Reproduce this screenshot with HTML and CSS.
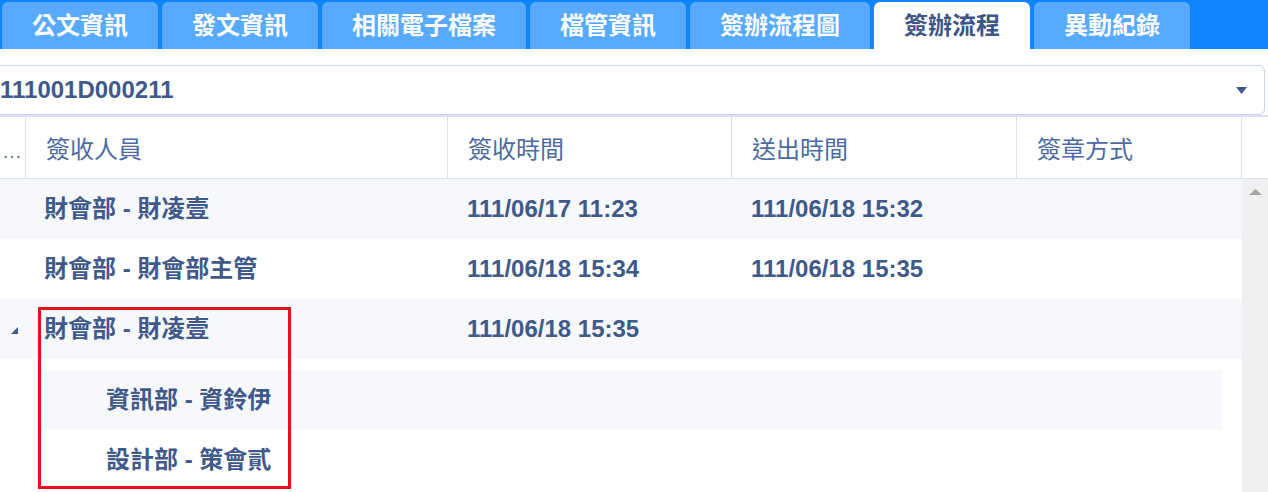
FILE: index.html
```html
<!DOCTYPE html>
<html lang="zh-Hant">
<head>
<meta charset="utf-8">
<title>簽辦流程</title>
<link rel="stylesheet" href="styles.css">
</head>
<body>
<div class="tabs">
  <div class="tab">公文資訊</div>
  <div class="tab">發文資訊</div>
  <div class="tab">相關電子檔案</div>
  <div class="tab">檔管資訊</div>
  <div class="tab">簽辦流程圖</div>
  <div class="tab active">簽辦流程</div>
  <div class="tab">異動紀錄</div>
</div>

<div class="select">
  <span class="select-value">111001D000211</span>
  <svg class="caret" width="11" height="7" viewBox="0 0 11 7"><polygon points="0,0 11,0 5.5,7" fill="#3f5a8c"/></svg>
</div>

<div class="grid">
  <div class="head">
    <div class="hcell first">…</div>
    <div class="hcell">簽收人員</div>
    <div class="hcell">簽收時間</div>
    <div class="hcell">送出時間</div>
    <div class="hcell">簽章方式</div>
    <div class="hcell spacer"></div>
  </div>
  <div class="body-wrap">
    <div class="body">
      <div class="row alt">
        <div class="cell first"></div>
        <div class="cell name">財會部 - 財凌壹</div>
        <div class="cell">111/06/17 11:23</div>
        <div class="cell">111/06/18 15:32</div>
        <div class="cell"></div>
      </div>
      <div class="row">
        <div class="cell first"></div>
        <div class="cell name">財會部 - 財會部主管</div>
        <div class="cell">111/06/18 15:34</div>
        <div class="cell">111/06/18 15:35</div>
        <div class="cell"></div>
      </div>
      <div class="row alt">
        <div class="cell first expander"><svg width="7" height="7" viewBox="0 0 7 7"><polygon points="7,0 7,7 0,7" fill="#3f5a8c"/></svg></div>
        <div class="cell name">財會部 - 財凌壹</div>
        <div class="cell">111/06/18 15:35</div>
        <div class="cell"></div>
        <div class="cell"></div>
      </div>
      <div class="nested">
        <div class="subrow alt">資訊部 - 資鈴伊</div>
        <div class="subrow">設計部 - 策會貳</div>
      </div>
      <div class="highlight"></div>
    </div>
    <div class="scrollbar">
      <svg class="arrow" width="13" height="6" viewBox="0 0 13 6"><polygon points="6.5,0 13,6 0,6" fill="#a6a6a6"/></svg>
    </div>
  </div>
</div>
</body>
</html>
```

FILE: styles.css
```css
* { box-sizing: border-box; }

html, body {
  margin: 0;
  padding: 0;
  background: #ffffff;
  font-family: "Liberation Sans", "Noto Sans CJK TC", sans-serif;
  font-size: 24px;
  color: #3f5a8a;
  overflow: hidden;
  width: 1268px;
  height: 492px;
}

.tabs {
  display: flex;
  gap: 4px;
  height: 49px;
  padding: 2px 0 0 2px;
  background: #0f86ff;
}

.tab {
  height: 47px;
  padding: 0 30px;
  display: flex;
  align-items: center;
  background: #57aaff;
  color: #ffffff;
  font-weight: 700;
  border-radius: 6px 6px 0 0;
  white-space: nowrap;
  line-height: 1;
}

.tab.active {
  background: #ffffff;
  color: #3e5587;
}

.select {
  margin: 16px 3px 0 0;
  height: 50px;
  border: 1px solid #c9d5ec;
  border-left: none;
  border-radius: 0 6px 6px 0;
  display: flex;
  align-items: center;
  justify-content: space-between;
  padding: 0 17px 0 0;
}

.select-value {
  font-weight: 700;
  color: #3f5a8a;
  line-height: 1;
}

.grid {
  border-top: 2px solid #d8e2f4;
}

.head {
  display: grid;
  grid-template-columns: 26px 422px 284px 285px 225px 26px;
  height: 62px;
  border-bottom: 1px solid #d6e0f2;
}

.hcell {
  border-right: 1px solid #d6e0f2;
  display: flex;
  align-items: center;
  padding-left: 20px;
  color: #4d6aa2;
  font-weight: 400;
  white-space: nowrap;
}

.hcell.first {
  padding-left: 2px;
  font-size: 20px;
  color: #5b74a6;
  padding-top: 8px;
}

.hcell.spacer {
  border-right: none;
}

.body-wrap {
  display: flex;
  height: 313px;
}

.body {
  position: relative;
  width: 1242px;
}

.row {
  display: grid;
  grid-template-columns: 26px 422px 284px 285px 225px;
  height: 60px;
}

.alt {
  background: #f6f8fc;
}

.cell {
  display: flex;
  align-items: center;
  padding-left: 19px;
  font-weight: 700;
  white-space: nowrap;
  line-height: 1;
}

.cell.name {
  padding-left: 18px;
}

.cell.first {
  padding-left: 0;
}

.cell.expander {
  padding-left: 11px;
  padding-top: 3px;
}

.nested {
  margin: 11px 20px 0 44px;
}

.subrow {
  height: 60px;
  display: flex;
  align-items: center;
  padding-left: 62px;
  font-weight: 700;
  line-height: 1;
}

.highlight {
  position: absolute;
  left: 38px;
  top: 128px;
  width: 253px;
  height: 182px;
  border: 3px solid #e1141c;
}

.scrollbar {
  width: 26px;
  background: #f0f0f0;
  display: flex;
  justify-content: center;
  padding-top: 10px;
}

.arrow {
  display: block;
}
```
